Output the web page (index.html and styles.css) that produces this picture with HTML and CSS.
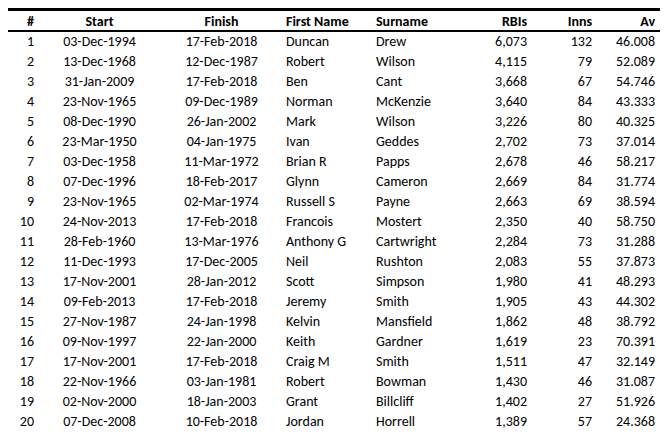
FILE: index.html
```html
<!DOCTYPE html>
<html>
<head>
<meta charset="utf-8">
<link rel="stylesheet" href="styles.css">
</head>
<body>
<div class="sheet">
  <div class="row head">
    <div class="c num">#</div><div class="c start">Start</div><div class="c finish">Finish</div><div class="c first">First Name</div><div class="c sur">Surname</div><div class="c rbi">RBIs</div><div class="c inns">Inns</div><div class="c av">Av</div>
  </div>
  <div class="row"><div class="c num">1</div><div class="c start">03-Dec-1994</div><div class="c finish">17-Feb-2018</div><div class="c first">Duncan</div><div class="c sur">Drew</div><div class="c rbi">6,073</div><div class="c inns">132</div><div class="c av">46.008</div></div>
  <div class="row"><div class="c num">2</div><div class="c start">13-Dec-1968</div><div class="c finish">12-Dec-1987</div><div class="c first">Robert</div><div class="c sur">Wilson</div><div class="c rbi">4,115</div><div class="c inns">79</div><div class="c av">52.089</div></div>
  <div class="row"><div class="c num">3</div><div class="c start">31-Jan-2009</div><div class="c finish">17-Feb-2018</div><div class="c first">Ben</div><div class="c sur">Cant</div><div class="c rbi">3,668</div><div class="c inns">67</div><div class="c av">54.746</div></div>
  <div class="row"><div class="c num">4</div><div class="c start">23-Nov-1965</div><div class="c finish">09-Dec-1989</div><div class="c first">Norman</div><div class="c sur">McKenzie</div><div class="c rbi">3,640</div><div class="c inns">84</div><div class="c av">43.333</div></div>
  <div class="row"><div class="c num">5</div><div class="c start">08-Dec-1990</div><div class="c finish">26-Jan-2002</div><div class="c first">Mark</div><div class="c sur">Wilson</div><div class="c rbi">3,226</div><div class="c inns">80</div><div class="c av">40.325</div></div>
  <div class="row"><div class="c num">6</div><div class="c start">23-Mar-1950</div><div class="c finish">04-Jan-1975</div><div class="c first">Ivan</div><div class="c sur">Geddes</div><div class="c rbi">2,702</div><div class="c inns">73</div><div class="c av">37.014</div></div>
  <div class="row"><div class="c num">7</div><div class="c start">03-Dec-1958</div><div class="c finish">11-Mar-1972</div><div class="c first">Brian R</div><div class="c sur">Papps</div><div class="c rbi">2,678</div><div class="c inns">46</div><div class="c av">58.217</div></div>
  <div class="row"><div class="c num">8</div><div class="c start">07-Dec-1996</div><div class="c finish">18-Feb-2017</div><div class="c first">Glynn</div><div class="c sur">Cameron</div><div class="c rbi">2,669</div><div class="c inns">84</div><div class="c av">31.774</div></div>
  <div class="row"><div class="c num">9</div><div class="c start">23-Nov-1965</div><div class="c finish">02-Mar-1974</div><div class="c first">Russell S</div><div class="c sur">Payne</div><div class="c rbi">2,663</div><div class="c inns">69</div><div class="c av">38.594</div></div>
  <div class="row"><div class="c num">10</div><div class="c start">24-Nov-2013</div><div class="c finish">17-Feb-2018</div><div class="c first">Francois</div><div class="c sur">Mostert</div><div class="c rbi">2,350</div><div class="c inns">40</div><div class="c av">58.750</div></div>
  <div class="row"><div class="c num">11</div><div class="c start">28-Feb-1960</div><div class="c finish">13-Mar-1976</div><div class="c first">Anthony G</div><div class="c sur">Cartwright</div><div class="c rbi">2,284</div><div class="c inns">73</div><div class="c av">31.288</div></div>
  <div class="row"><div class="c num">12</div><div class="c start">11-Dec-1993</div><div class="c finish">17-Dec-2005</div><div class="c first">Neil</div><div class="c sur">Rushton</div><div class="c rbi">2,083</div><div class="c inns">55</div><div class="c av">37.873</div></div>
  <div class="row"><div class="c num">13</div><div class="c start">17-Nov-2001</div><div class="c finish">28-Jan-2012</div><div class="c first">Scott</div><div class="c sur">Simpson</div><div class="c rbi">1,980</div><div class="c inns">41</div><div class="c av">48.293</div></div>
  <div class="row"><div class="c num">14</div><div class="c start">09-Feb-2013</div><div class="c finish">17-Feb-2018</div><div class="c first">Jeremy</div><div class="c sur">Smith</div><div class="c rbi">1,905</div><div class="c inns">43</div><div class="c av">44.302</div></div>
  <div class="row"><div class="c num">15</div><div class="c start">27-Nov-1987</div><div class="c finish">24-Jan-1998</div><div class="c first">Kelvin</div><div class="c sur">Mansfield</div><div class="c rbi">1,862</div><div class="c inns">48</div><div class="c av">38.792</div></div>
  <div class="row"><div class="c num">16</div><div class="c start">09-Nov-1997</div><div class="c finish">22-Jan-2000</div><div class="c first">Keith</div><div class="c sur">Gardner</div><div class="c rbi">1,619</div><div class="c inns">23</div><div class="c av">70.391</div></div>
  <div class="row"><div class="c num">17</div><div class="c start">17-Nov-2001</div><div class="c finish">17-Feb-2018</div><div class="c first">Craig M</div><div class="c sur">Smith</div><div class="c rbi">1,511</div><div class="c inns">47</div><div class="c av">32.149</div></div>
  <div class="row"><div class="c num">18</div><div class="c start">22-Nov-1966</div><div class="c finish">03-Jan-1981</div><div class="c first">Robert</div><div class="c sur">Bowman</div><div class="c rbi">1,430</div><div class="c inns">46</div><div class="c av">31.087</div></div>
  <div class="row"><div class="c num">19</div><div class="c start">02-Nov-2000</div><div class="c finish">18-Jan-2003</div><div class="c first">Grant</div><div class="c sur">Billcliff</div><div class="c rbi">1,402</div><div class="c inns">27</div><div class="c av">51.926</div></div>
  <div class="row"><div class="c num">20</div><div class="c start">07-Dec-2008</div><div class="c finish">10-Feb-2018</div><div class="c first">Jordan</div><div class="c sur">Horrell</div><div class="c rbi">1,389</div><div class="c inns">57</div><div class="c av">24.368</div></div>
</div>
</body>
</html>
```
FILE: styles.css
```css
html, body {
  margin: 0;
  padding: 0;
  background: #fff;
}
body {
  padding: 8px 8px 0 8px;
  font-family: Carlito, Calibri, Roboto, sans-serif;
  font-size: 14px;
  color: #000;
}
.sheet {
  width: 652px;
  border-top: 3px solid #000;
}
.row {
  display: grid;
  grid-template-columns: 42px 99px 131px 90px 90px 75px 65px 60px;
  height: 20px;
  align-items: center;
  white-space: nowrap;
}
.row.head {
  height: 19px;
  border-bottom: 2px solid #000;
  font-weight: bold;
  align-items: start;
}
.c {
  line-height: 20px;
}
.head .c {
  line-height: 21px;
}
.num { text-align: right; padding-right: 16px; }
.start { text-align: center; }
.finish { text-align: center; padding-left: 14px; }
.first { padding-left: 6px; }
.sur { padding-left: 6px; }
.rbi { text-align: right; padding-right: 8px; }
.inns { text-align: right; padding-right: 8px; }
.av { text-align: right; padding-right: 5px; }
```
